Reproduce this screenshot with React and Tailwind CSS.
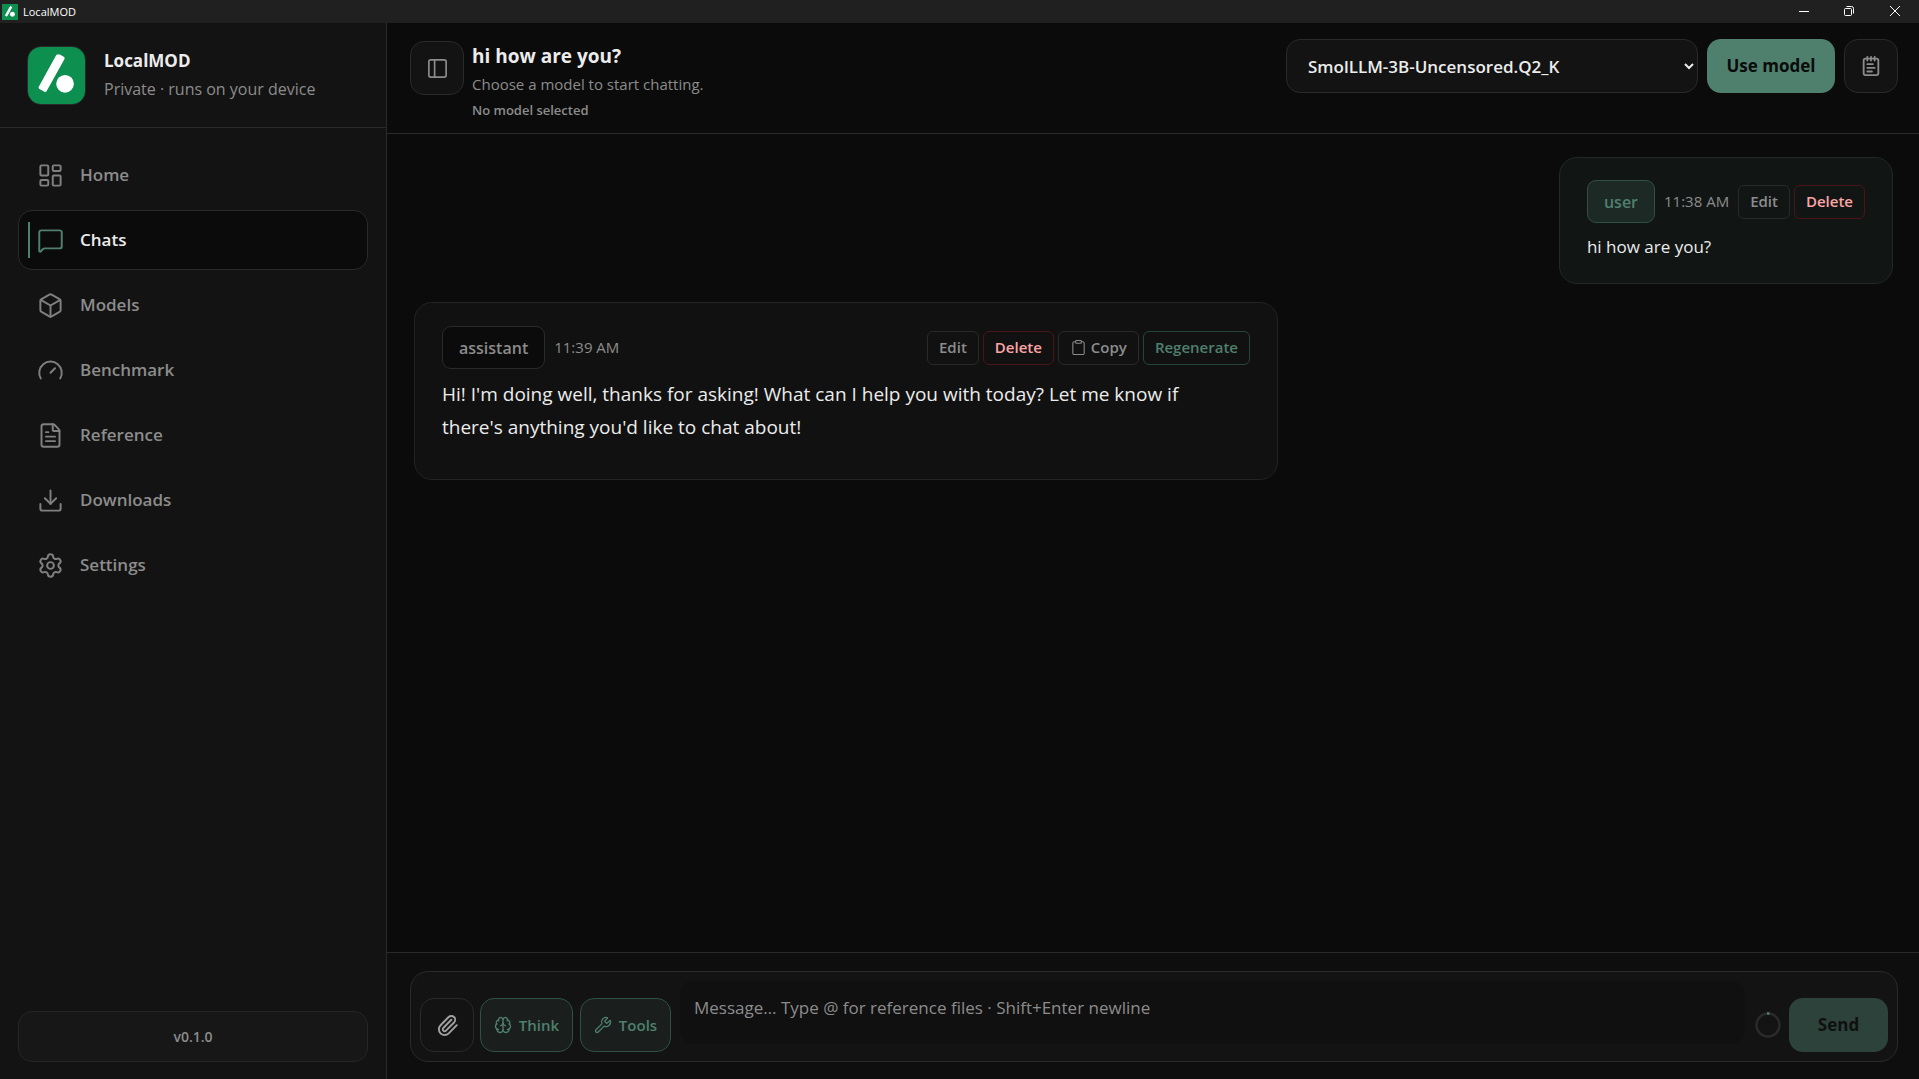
import {
  Box,
  Brain,
  Clipboard,
  Download,
  FileText,
  Gauge,
  LayoutDashboard,
  MessageSquare,
  NotepadText,
  PanelLeft,
  Paperclip,
  Settings,
  Wrench,
} from "lucide-react";
import { useState } from "react";

const NAV_ITEMS = [
  { id: "home", label: "Home", icon: LayoutDashboard },
  { id: "chats", label: "Chats", icon: MessageSquare },
  { id: "models", label: "Models", icon: Box },
  { id: "benchmark", label: "Benchmark", icon: Gauge },
  { id: "reference", label: "Reference", icon: FileText },
  { id: "downloads", label: "Downloads", icon: Download },
  { id: "settings", label: "Settings", icon: Settings },
];

const MESSAGES = [
  { id: 1, role: "user", time: "11:38 AM", text: "hi how are you?" },
  {
    id: 2,
    role: "assistant",
    time: "11:39 AM",
    text: "Hi! I'm doing well, thanks for asking! What can I help you with today? Let me know if there's anything you'd like to chat about!",
  },
];

function LogoMark({ className }) {
  return (
    <svg viewBox="0 0 58 58" className={className} aria-hidden="true">
      <rect width="58" height="58" fill="#0c8f4f" />
      <path d="M32 9.500 L35.500 11.500 L17.500 44 L12.500 41.200 L30 9.500 Z" fill="#fff" stroke="#fff" strokeWidth="3.500" strokeLinejoin="round" />
      <circle cx="37.700" cy="37.500" r="9" fill="#fff" />
    </svg>
  );
}

function TitleBar() {
  return (
    <div className="flex h-[23px] shrink-0 items-center justify-between bg-[#202020] text-white">
      <div className="flex items-center gap-[5px] pl-0.5">
        <LogoMark className="size-4" />
        <span className="text-[11px] leading-4">LocalMOD</span>
      </div>
      <div className="flex h-full pr-px pb-0.5">
        <button type="button" aria-label="Minimize" className="flex w-[45px] items-center justify-center">
          <svg viewBox="0 0 10 10" className="size-2.5" fill="none" stroke="currentColor">
            <path d="M0 5.500h10" />
          </svg>
        </button>
        <button type="button" aria-label="Restore" className="flex w-[45px] items-center justify-center">
          <svg viewBox="0 0 10 10" className="size-2.5" fill="none" stroke="currentColor">
            <rect x="0.500" y="2.500" width="7" height="7" rx="1" />
            <path d="M2.500 0.500h5a2 2 0 0 1 2 2v5" />
          </svg>
        </button>
        <button type="button" aria-label="Close" className="flex w-[47px] items-center justify-center">
          <svg viewBox="0 0 10 10" className="size-2.5" fill="none" stroke="currentColor">
            <path d="M0 0l10 10M10 0L0 10" />
          </svg>
        </button>
      </div>
    </div>
  );
}

function Sidebar({ active, onSelect }) {
  return (
    <aside className="flex w-[387px] shrink-0 flex-col border-r border-[#2a2a2a] bg-[#131313]">
      <div className="flex h-[105px] items-center gap-[18px] border-b border-[#2a2a2a] px-[27px]">
        <LogoMark className="size-[59px] rounded-[14px] border border-[#2a2a2a]" />
        <div>
          <h1 className="text-[17px] leading-7 font-bold text-[#ececec]">LocalMOD</h1>
          <p className="text-base leading-7 text-[#8c8c8c]">Private · runs on your device</p>
        </div>
      </div>

      <nav className="flex flex-1 flex-col gap-[5px] px-[18px] pt-[17px]">
        {NAV_ITEMS.map((item) => {
          const Icon = item.icon;
          const isActive = item.id === active;

          return (
            <button
              key={item.id}
              type="button"
              onClick={() => onSelect(item.id)}
              className={`relative flex h-[60px] items-center gap-4 rounded-[14px] border pl-[18px] text-[17px] font-semibold ${
                isActive ? "border-[#2a2a2a] bg-[#0b0b0b] text-[#ececec]" : "border-transparent text-[#8c8c8c]"
              }`}
            >
              {isActive && <span className="absolute inset-y-[11px] left-[9px] w-0.5 bg-[#4f7f6d]" />}
              <Icon size={27} strokeWidth={1.75} className={isActive ? "text-[#4f7f6d]" : "text-[#808080]"} />
              {item.label}
            </button>
          );
        })}
      </nav>

      <div className="px-[18px] pb-[17px]">
        <div className="flex h-[51px] items-center justify-center rounded-[14px] border border-[#262626] bg-[#171717] text-sm font-semibold text-[#8c8c8c]">
          v0.1.0
        </div>
      </div>
    </aside>
  );
}

function ChatHeader() {
  return (
    <header className="flex h-[111px] shrink-0 items-start justify-between border-b border-[#2a2a2a] px-[21px] pt-4">
      <div className="flex gap-2 pl-0.5">
        <button
          type="button"
          aria-label="Toggle chat list"
          className="mt-0.5 flex size-[54px] items-center justify-center rounded-[14px] border border-[#2a2a2a] bg-[#131313] text-[#8c8c8c]"
        >
          <PanelLeft size={23} strokeWidth={1.75} />
        </button>
        <div className="pt-[3px]">
          <h2 className="text-[19px] leading-7 font-bold text-[#ececec]">hi how are you?</h2>
          <p className="text-[15px] leading-7 text-[#8c8c8c]">Choose a model to start chatting.</p>
          <p className="text-[13px] leading-6 font-semibold text-[#8c8c8c]">No model selected</p>
        </div>
      </div>

      <div className="flex gap-[9px]">
        <select
          aria-label="Model"
          className="h-[54px] w-[412px] rounded-[14px] border border-[#2a2a2a] bg-[#131313] pl-[17px] text-[17px] font-semibold text-[#ececec]"
        >
          <option>SmolLLM-3B-Uncensored.Q2_K</option>
        </select>
        <button type="button" className="h-[54px] w-32 rounded-[14px] bg-[#4f7f6d] text-[17px] font-bold text-[#0b0b0b]">
          Use model
        </button>
        <button
          type="button"
          aria-label="Notes"
          className="flex size-[54px] items-center justify-center rounded-[14px] border border-[#2a2a2a] bg-[#131313] text-[#8c8c8c]"
        >
          <NotepadText size={22} strokeWidth={2} />
        </button>
      </div>
    </header>
  );
}

function ActionButton({ tone, children }) {
  const tones = {
    default: "border-[#2a2a2a] text-[#8c8c8c]",
    danger: "border-[#4a1518] text-[#fca5a5]",
    accent: "border-[#28443a] text-[#4f7f6d]",
  };

  return (
    <button
      type="button"
      className={`flex h-[34px] items-center gap-1 rounded-md border px-[11px] text-[15px] font-semibold ${tones[tone || "default"]}`}
    >
      {children}
    </button>
  );
}

function Message({ message }) {
  const isUser = message.role === "user";

  return (
    <article
      className={`rounded-[18px] border px-[27px] ${
        isUser
          ? "self-end border-[#232826] bg-[#111615] pt-[22px] pb-5"
          : "w-[864px] max-w-full self-start border-[#232323] bg-[#111111] pt-[23px] pb-[35px]"
      }`}
    >
      <div className="flex items-center justify-between gap-[9px]">
        <div className="flex items-center gap-[9px]">
          <span
            className={`flex h-[43px] items-center rounded-[9px] border px-4 text-base font-semibold ${
              isUser ? "border-[#2f5043] bg-[#1c2924] text-[#4f7f6d]" : "border-[#2a2a2a] bg-[#0b0b0b] text-[#8c8c8c]"
            }`}
          >
            {message.role}
          </span>
          <time className="text-[15px] text-[#8c8c8c]">{message.time}</time>
        </div>
        <div className="flex gap-1">
          <ActionButton>Edit</ActionButton>
          <ActionButton tone="danger">Delete</ActionButton>
          {!isUser && (
            <>
              <ActionButton>
                <Clipboard size={17} strokeWidth={1.5} />
                Copy
              </ActionButton>
              <ActionButton tone="accent">Regenerate</ActionButton>
            </>
          )}
        </div>
      </div>
      <p className={`leading-[33px] text-[#ececec] ${isUser ? "mt-[7px] text-[17px]" : "mt-[9px] pr-6 text-[19px]"}`}>
        {message.text}
      </p>
    </article>
  );
}

function Composer() {
  const [draft, setDraft] = useState("");

  return (
    <footer className="shrink-0 border-t border-[#2a2a2a] bg-[#0e0e0e] px-[21px] pt-[18px] pb-[17px]">
      <form
        onSubmit={(e) => e.preventDefault()}
        className="ml-0.5 flex h-[91px] items-end rounded-[18px] border border-[#2a2a2a] bg-[#131313] p-[9px]"
      >
        <button
          type="button"
          aria-label="Attach file"
          className="mr-1.5 flex size-[54px] items-center justify-center rounded-[14px] border border-[#2a2a2a] text-[#a0a0a0]"
        >
          <Paperclip size={23} strokeWidth={2} />
        </button>
        <button
          type="button"
          className="mr-[7px] flex h-[54px] w-[93px] items-center justify-center gap-[7px] rounded-[14px] border border-[#2f5043] bg-[#1a1f1d] text-[15px] font-semibold text-[#4f7f6d]"
        >
          <Brain size={18} strokeWidth={1.75} />
          Think
        </button>
        <button
          type="button"
          className="mr-[9px] flex h-[54px] w-[91px] items-center justify-center gap-[7px] rounded-[14px] border border-[#2f5043] bg-[#1a1f1d] text-[15px] font-semibold text-[#4f7f6d]"
        >
          <Wrench size={18} strokeWidth={1.75} />
          Tools
        </button>
        <textarea
          aria-label="Message"
          value={draft}
          onChange={(e) => setDraft(e.target.value)}
          placeholder="Message… Type @ for reference files · Shift+Enter newline"
          className="h-[63px] flex-1 resize-none self-start rounded-[14px] bg-[#101010] px-3.5 py-[13px] text-[17px] leading-[27px] text-[#ececec] outline-none placeholder:text-[#8c8c8c]"
        />
        <div className="flex h-[54px] w-11 items-center justify-center pl-0.5">
          <svg viewBox="0 0 26 26" className="size-[26px]" fill="none" strokeWidth="2.500">
            <circle cx="13" cy="13" r="11.500" stroke="#2a2a2a" />
            <path d="M12 1.500h2.500" stroke="#4f7f6d" />
          </svg>
        </div>
        <button type="submit" className="h-[54px] w-[99px] rounded-[14px] bg-[#2d423a] text-[17px] font-bold text-[#0f1110]">
          Send
        </button>
      </form>
    </footer>
  );
}

function App() {
  const [page, setPage] = useState("chats");

  return (
    <div className="flex h-screen flex-col overflow-hidden bg-[#0b0b0b] font-['Open_Sans','Noto_Sans',sans-serif]">
      <TitleBar />
      <div className="flex min-h-0 flex-1">
        <Sidebar active={page} onSelect={setPage} />
        <main className="flex min-w-0 flex-1 flex-col">
          <ChatHeader />
          <div className="flex flex-1 flex-col gap-[18px] overflow-y-auto pt-[23px] pr-[26px] pl-[27px]">
            {MESSAGES.map((message) => (
              <Message key={message.id} message={message} />
            ))}
          </div>
          <Composer />
        </main>
      </div>
    </div>
  );
}

export default App;
